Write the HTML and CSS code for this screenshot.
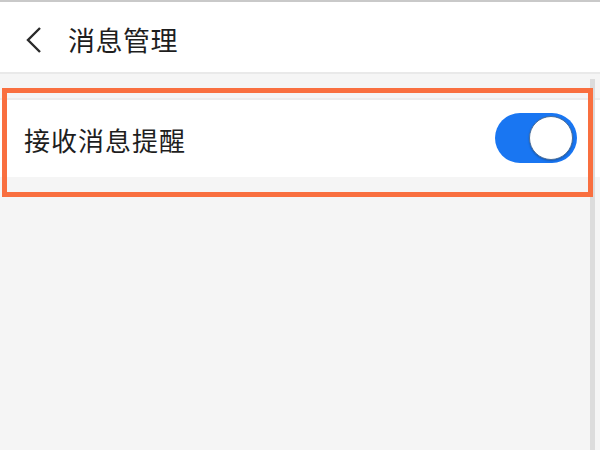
FILE: index.html
```html
<!DOCTYPE html>
<html lang="zh-CN">
<head>
<meta charset="utf-8">
<title>消息管理</title>
<link rel="stylesheet" href="styles.css">
</head>
<body>
<div class="screen">
  <header class="topbar">
    <span class="back">
      <svg width="20" height="28" viewBox="0 0 20 28"><polyline points="16,2 4,14 16,26" fill="none" stroke="#2a2a2a" stroke-width="2.4" stroke-linejoin="miter"/></svg>
    </span>
    <h1 class="title">消息管理</h1>
  </header>
  <div class="gap"></div>
  <div class="row">
    <span class="label">接收消息提醒</span>
    <span class="switch"><span class="knob"></span></span>
  </div>
  <div class="scrollbar"></div>
  <div class="highlight"></div>
</div>
</body>
</html>
```
FILE: styles.css
```css
html, body {
  margin: 0;
  padding: 0;
}
body {
  font-family: "Noto Sans CJK SC", "Noto Sans", sans-serif;
  background: #f5f5f5;
  color: #1e1e1e;
}
.screen {
  position: relative;
  width: 600px;
  height: 450px;
  overflow: hidden;
  background: #f5f5f5;
}
.topbar {
  height: 70px;
  background: #ffffff;
  border-top: 2px solid #c9c9c9;
  border-bottom: 2px solid #e9e9e9;
  display: flex;
  align-items: center;
}
.back {
  display: flex;
  margin-left: 24px;
  width: 20px;
  margin-top: 6px;
}
.title {
  margin: 0 0 0 24px;
  font-size: 27px;
  font-weight: 400;
  line-height: 1;
  margin-top: 4px;
  letter-spacing: 0.5px;
}
.gap {
  height: 24px;
  border-bottom: 2px solid #ececec;
}
.row {
  height: 77px;
  background: #ffffff;
  display: flex;
  align-items: center;
  justify-content: space-between;
  padding: 0 23px 0 24px;
}
.label {
  font-size: 26px;
  letter-spacing: 1px;
  margin-top: 2px;
}
.switch {
  width: 82px;
  height: 50px;
  border-radius: 25px;
  background: #1976f2;
  position: relative;
  margin-top: -2px;
}
.knob {
  position: absolute;
  right: 4px;
  top: 3px;
  width: 42px;
  height: 42px;
  border-radius: 50%;
  background: #ffffff;
  border: 1px solid #4a6f9c;
  box-shadow: 0 1px 2px rgba(0,0,0,0.25);
}
.scrollbar {
  position: absolute;
  left: 590px;
  top: 79px;
  width: 5px;
  bottom: 0;
  background: #dcdcdc;
}
.highlight {
  position: absolute;
  left: 2px;
  top: 88px;
  width: 581px;
  height: 99px;
  border: 5px solid #f96f3f;
}
```
